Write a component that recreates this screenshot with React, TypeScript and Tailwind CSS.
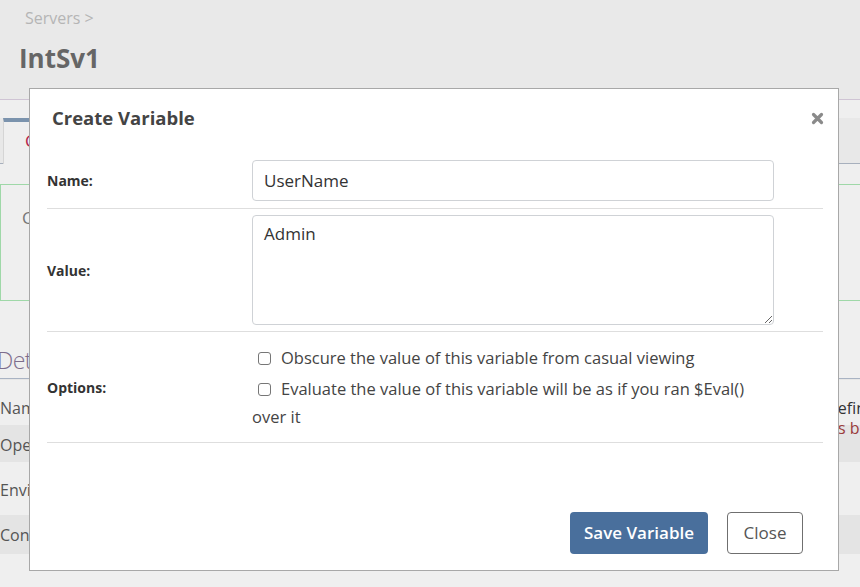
import React from "react";

const font = { fontFamily: '"Open Sans", "Noto Sans", sans-serif' };

function Checkbox() {
  return <span className="inline-block w-[13px] h-[13px] border border-[#767676] rounded-[3px] bg-white align-middle mr-[10px] ml-[6px] -mt-[3px]" />;
}

function FormRow({ label, children, className = "" }: { label: string; children: React.ReactNode; className?: string }) {
  return (
    <div className={`grid grid-cols-[205px_1fr] items-center border-b border-[#dedede] ${className}`}>
      <div className="text-[14px] font-bold text-[#333]">{label}</div>
      <div>{children}</div>
    </div>
  );
}

export default function App() {
  return (
    <div className="relative w-[860px] h-[587px] overflow-hidden bg-[#efefef]" style={font}>
      {/* page behind the dialog */}
      <div className="bg-[#e9e9e9] h-[100px] border-b border-[#cfc4d4] pl-[19px] pt-[4px]">
        <div className="text-[16px] text-[#b5b5b5] pl-[6px] leading-[28px]">Servers &gt;</div>
        <h1 className="text-[26px] font-bold text-[#666] leading-[44px] mt-[4px]">IntSv1</h1>
      </div>
      <div className="mt-[18px] h-[46px] bg-[#e8e8e8] border-b border-[#a7b0bd] flex">
        <div className="ml-[3px] w-[140px] border-t-4 border-[#7b93ad] border-x border-x-[#d5d5d5] bg-[#efefef] h-[46px] pl-[21px] pt-[6px] text-[17px] text-[#b3264a]">
          C
        </div>
      </div>
      <div className="mt-[20px] h-[117px] border border-[#9fd8a8] border-r-0 pl-[21px] pt-[20px] text-[17px] text-[#777]">
        C
      </div>
      <div className="mt-[42px] border-b border-[#a9b3c3] text-[23px] font-light leading-[34px] text-[#7d6d8c] pb-[1px]">
        <span className="-ml-[3px] tracking-[-0.5px]">Details</span>
      </div>
      <div className="text-[16px] text-[#555]">
        <div className="h-[46px] flex items-start justify-between border-t border-[#e6e6e6] pt-[18px] leading-[20px]">
          <span>Name</span>
          <span className="w-[32px] whitespace-nowrap text-[#333]">
            define
            <br />
            <span className="pl-[6px] text-[#9a3b3b]">is be</span>
          </span>
        </div>
        <div className="h-[37px] flex items-center bg-[#e4e4e4] pt-[2px]">Operating</div>
        <div className="h-[53px] flex items-center pt-[2px]">Environment</div>
        <div className="h-[39px] flex items-center bg-[#e4e4e4]">Configuration</div>
      </div>

      {/* dialog */}
      <div className="absolute left-[29px] top-[88px] w-[810px] h-[483px] bg-white border border-[#a8a8a8] flex flex-col">
        <div className="flex items-center justify-between h-[60px] pl-[22px] pr-[14px] pb-[2px]">
          <h2 className="text-[18.5px] font-bold text-[#444]">Create Variable</h2>
          <svg width="13" height="13" viewBox="0 0 13 13">
            <path d="M2.5 2.5 L10.5 10.5 M10.5 2.5 L2.5 10.5" stroke="#8a8a8a" strokeWidth="3.2" strokeLinecap="round" />
          </svg>
        </div>
        <div className="ml-[17px] mr-[15px]">
          <FormRow label="Name:" className="pt-[11px] pb-[7px]">
            <input
              defaultValue="UserName"
              className="w-[522px] h-[41px] border border-[#cfd2d6] rounded-[4px] px-[11px] text-[17px] text-[#333] outline-none"
              style={font}
            />
          </FormRow>
          <FormRow label="Value:" className="pt-[6px] pb-[6px]">
            <textarea
              defaultValue="Admin"
              className="block w-[522px] h-[110px] border border-[#cfd2d6] rounded-[4px] px-[11px] py-[6px] text-[17px] text-[#333] outline-none leading-[24px]"
              style={font}
            />
          </FormRow>
          <FormRow label="Options:" className="pt-[12px] pb-[11px]">
            <div className="text-[16.5px] text-[#444] leading-[28px] whitespace-nowrap">
              <div className="mb-[3px]">
                <Checkbox />
                Obscure the value of this variable from casual viewing
              </div>
              <div>
                <Checkbox />
                Evaluate the value of this variable will be as if you ran $Eval()
                <br />
                over it
              </div>
            </div>
          </FormRow>
        </div>
        <div className="flex-1 flex items-end justify-end gap-[19px] pr-[35px] pb-[16px]">
          <button className="h-[42px] w-[138px] rounded-[4px] bg-[#496f9c] text-white text-[17px] font-semibold">
            Save Variable
          </button>
          <button className="h-[42px] w-[76px] rounded-[4px] border border-[#6f6f6f] bg-white text-[#555] text-[17px]">
            Close
          </button>
        </div>
      </div>
    </div>
  );
}
